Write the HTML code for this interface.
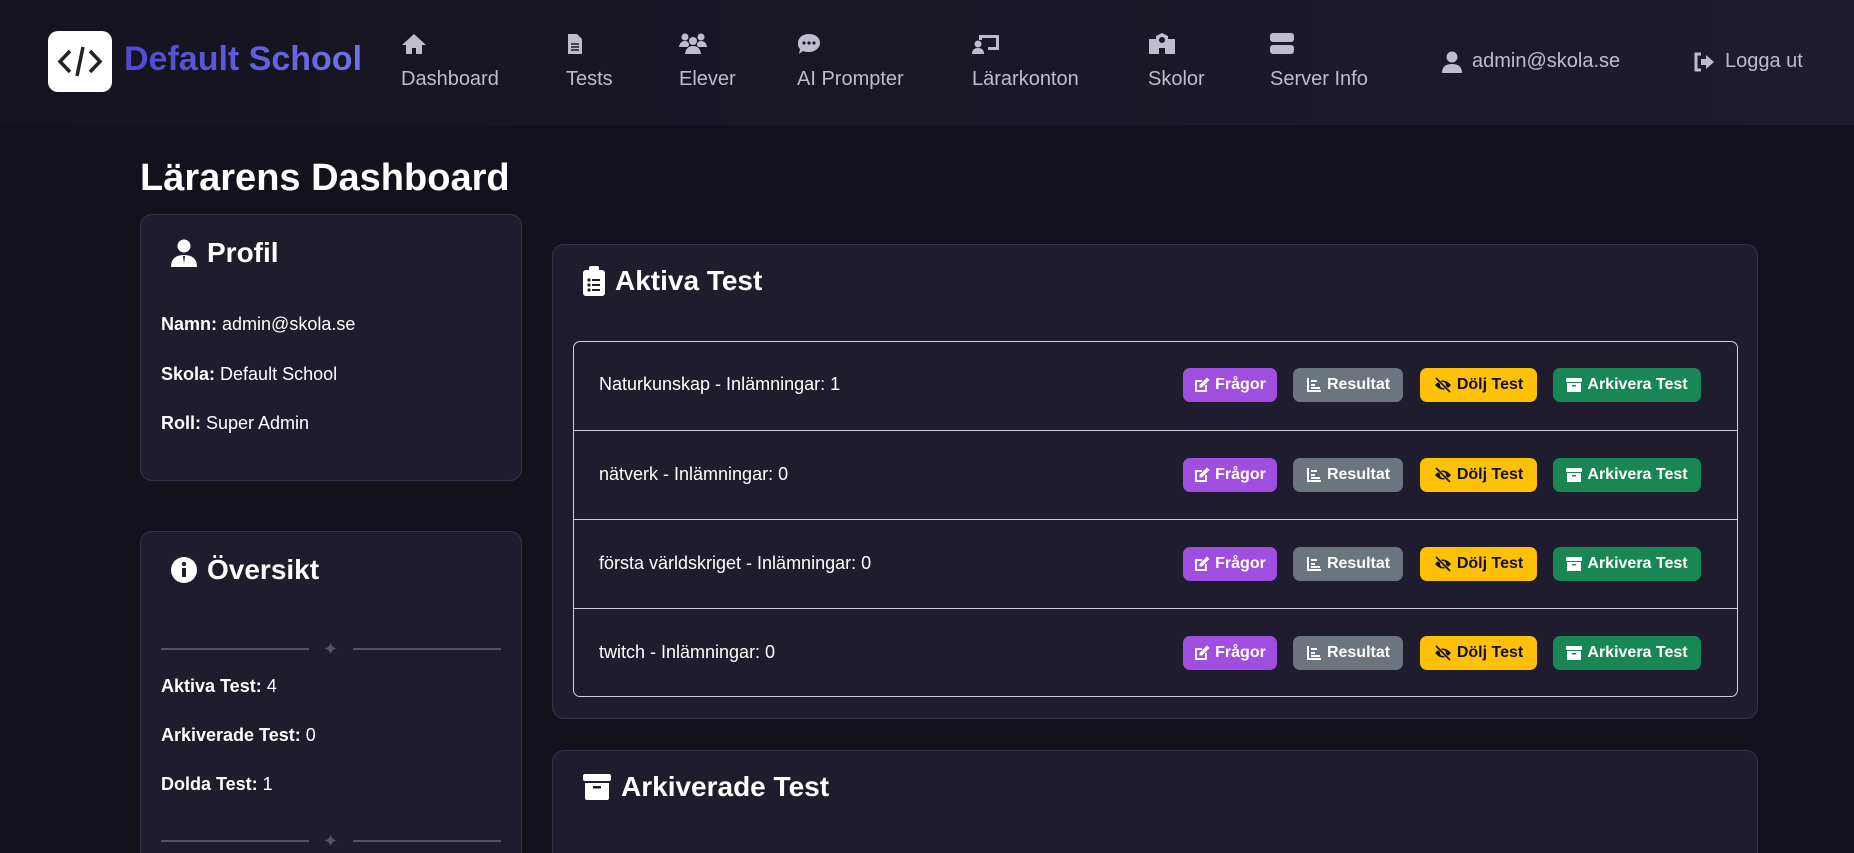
<!DOCTYPE html>
<html style="height:853px;overflow:hidden"><head><meta charset="utf-8"><style>
*{box-sizing:border-box;margin:0;padding:0}
body{width:1854px;height:853px;overflow:hidden;background:#13111c;font-family:"Liberation Sans",sans-serif;color:#fff;position:relative}
.abs{position:absolute}
.nav{position:absolute;left:0;top:0;width:1854px;height:125px;background:linear-gradient(90deg,#15131f,#1e1c2b)}
.ni{position:absolute;color:#bfbccb;font-size:20px;text-align:left}
.ni svg{display:block;margin-bottom:13px;fill:#bfbccb}
.card{position:absolute;background:#1e1c2d;border:1px solid #34324a;border-radius:12px}
.h{position:absolute;font-size:28px;font-weight:bold;display:flex;align-items:center;gap:10px}
.t{position:absolute;font-size:18px}
.row{position:absolute;left:0;width:100%;height:89px;border-top:1px solid #d0d0d8}
.row .lbl{position:absolute;left:25px;top:33px;font-size:18px}
.b{position:absolute;top:27px;height:34px;border-radius:7px;font-size:16px;font-weight:bold;display:flex;align-items:center;justify-content:center;gap:5px;color:#fff}
.b svg{width:16px;height:16px}
.div{position:absolute;left:20px;width:340px;height:2px}
.div:before,.div:after{content:"";position:absolute;top:0;width:148px;height:2px;background:#55536a}
.div:before{left:0}.div:after{right:0}
.div span{position:absolute;left:162px;top:-9px;color:#55536a;font-size:18px}
</style></head><body>
<div class="nav">
 <div class="abs" style="left:48px;top:31px;width:64px;height:61px;background:#fff;border-radius:10px"><svg width="64" height="61" viewBox="0 0 64 61"><path d="M22 20 L12 30.5 L22 41 M42 20 L52 30.5 L42 41 M35 16 L29 45" stroke="#222" stroke-width="3.5" fill="none"/></svg></div>
 <div class="abs" style="left:124px;top:40px;font-size:34px;font-weight:bold;color:#5d55d8;background:linear-gradient(90deg,#5048d4,#6f72e2);-webkit-background-clip:text;color:transparent">Default School</div>
 <div class="ni" style="left:401px;top:33px"><svg width="26" height="22" viewBox="0 0 26 22"><path d="M13 1 L25 12 H21 V21 H15 V15 H11 V21 H5 V12 H1Z"/></svg>Dashboard</div>
 <div class="ni" style="left:566px;top:33px"><svg width="18" height="22" viewBox="0 0 18 22"><path d="M2 1 H11 L16 6 V21 H2Z"/><path d="M5 11 H13 M5 14 H13 M5 17 H13" stroke="#1a1826" stroke-width="1.5"/></svg>Tests</div>
 <div class="ni" style="left:679px;top:33px"><svg width="28" height="22" viewBox="0 0 28 22"><circle cx="6" cy="4" r="3.5"/><circle cx="22" cy="4" r="3.5"/><circle cx="14" cy="8" r="4"/><path d="M0 14 Q1 8 6 8 Q10 8 10 12 L9 14Z M28 14 Q27 8 22 8 Q18 8 18 12 L19 14Z M6 21 Q7 13 14 13 Q21 13 22 21Z"/></svg>Elever</div>
 <div class="ni" style="left:797px;top:33px"><svg width="24" height="22" viewBox="0 0 24 22"><path d="M12 1 C19 1 23 5 23 10 C23 15 18 19 12 19 C10 19 8 19 6 18 L2 21 L3 16 C1 14 1 12 1 10 C1 5 5 1 12 1Z"/><circle cx="7" cy="10" r="1.6" fill="#1a1826"/><circle cx="12" cy="10" r="1.6" fill="#1a1826"/><circle cx="17" cy="10" r="1.6" fill="#1a1826"/></svg>AI Prompter</div>
 <div class="ni" style="left:972px;top:33px"><svg width="28" height="22" viewBox="0 0 28 22"><path d="M7 2 H27 V17 H16 V14 H24 V5 H10 V7 H7Z"/><circle cx="6" cy="11" r="3.5"/><path d="M0 21 Q0 15 6 15 Q12 15 12 21Z"/></svg>Lärarkonton</div>
 <div class="ni" style="left:1148px;top:33px"><svg width="28" height="22" viewBox="0 0 28 22"><path d="M1 6 H8 V3 L14 0 L20 3 V6 H27 V21 H17 V15 H11 V21 H1Z"/><circle cx="14" cy="7" r="3" fill="#1a1826"/></svg>Skolor</div>
 <div class="ni" style="left:1270px;top:33px"><svg width="24" height="22" viewBox="0 0 24 22"><rect x="0" y="0" width="24" height="9" rx="3"/><rect x="0" y="12" width="24" height="9" rx="3"/></svg>Server Info</div>
 <div class="ni" style="left:1442px;top:50px;display:flex;align-items:center;gap:10px"><svg width="20" height="22" viewBox="0 0 20 22" style="margin:0"><circle cx="10" cy="6" r="5.5"/><path d="M0 22 Q0 13 10 13 Q20 13 20 22Z"/></svg>admin@skola.se</div>
 <div class="ni" style="left:1693px;top:50px;display:flex;align-items:center;gap:10px"><svg width="22" height="20" viewBox="0 0 22 20" style="margin:0"><path d="M8 2 H3 V18 H8" stroke="#bfbccb" stroke-width="3" fill="none"/><path d="M8 7 H13 V3 L21 10 L13 17 V13 H8Z"/></svg>Logga ut</div>
</div>

<div class="abs" style="left:140px;top:157px;font-size:38px;font-weight:bold">Lärarens Dashboard</div>

<div class="card" style="left:140px;top:214px;width:382px;height:267px">
 <div class="h" style="left:30px;top:22px"><svg width="26" height="28" viewBox="0 0 26 28" fill="#fff"><circle cx="13" cy="7" r="6.5"/><path d="M0 28 Q0 16 13 16 Q26 16 26 28Z"/><path d="M12 17 L13 25 L14 17Z" fill="#1e1c2d"/></svg>Profil</div>
 <div class="t" style="left:20px;top:99px"><b>Namn:</b> admin@skola.se</div>
 <div class="t" style="left:20px;top:149px"><b>Skola:</b> Default School</div>
 <div class="t" style="left:20px;top:198px"><b>Roll:</b> Super Admin</div>
</div>

<div class="card" style="left:140px;top:531px;width:382px;height:340px;border-bottom:none">
 <div class="h" style="left:30px;top:22px"><svg width="26" height="26" viewBox="0 0 26 26"><circle cx="13" cy="13" r="13" fill="#fff"/><rect x="11" y="11" width="4" height="9" fill="#1e1c2d"/><circle cx="13" cy="7" r="2.2" fill="#1e1c2d"/></svg>Översikt</div>
 <div class="div" style="top:116px"><span>✦</span></div>
 <div class="t" style="left:20px;top:144px"><b>Aktiva Test:</b> 4</div>
 <div class="t" style="left:20px;top:193px"><b>Arkiverade Test:</b> 0</div>
 <div class="t" style="left:20px;top:242px"><b>Dolda Test:</b> 1</div>
 <div class="div" style="top:308px"><span>✦</span></div>
</div>

<div class="card" style="left:552px;top:244px;width:1206px;height:475px">
 <div class="h" style="left:30px;top:20px"><svg width="22" height="30" viewBox="0 0 22 30" fill="#fff"><rect x="0" y="4" width="22" height="26" rx="3"/><rect x="6" y="0" width="10" height="7" rx="2"/><g fill="#1e1c2d"><circle cx="6" cy="14" r="1.6"/><circle cx="6" cy="19" r="1.6"/><circle cx="6" cy="24" r="1.6"/><rect x="9" y="13" width="8" height="2"/><rect x="9" y="18" width="8" height="2"/><rect x="9" y="23" width="8" height="2"/></g></svg>Aktiva Test</div>
 <div class="abs" style="left:20px;top:96px;width:1165px;height:356px;border:1px solid #d0d0d8;border-radius:7px;overflow:hidden"></div>
</div>

<div class="card" style="left:552px;top:750px;width:1206px;height:120px;border-bottom:none">
 <div class="h" style="left:30px;top:20px"><svg width="28" height="26" viewBox="0 0 28 26" fill="#fff"><rect x="0" y="0" width="28" height="7" rx="2"/><path d="M2 9 H26 V24 Q26 26 24 26 H4 Q2 26 2 24Z"/><rect x="10" y="12" width="8" height="2.5" fill="#1e1c2d"/></svg>Arkiverade Test</div>
</div>

<script>
var box=document.querySelector('.card .abs');
var names=["Naturkunskap","nätverk","första världskriget","twitch"],counts=[1,0,0,0];
var pen='<svg viewBox="0 0 16 16" fill="#fff"><path d="M1 3 H8 V5 H3 V13 H11 V8 H13 V15 H1Z"/><path d="M13 0.5 L15.5 3 L8 10.5 L5.5 10.5 L5.5 8Z"/></svg>';
var chart='<svg viewBox="0 0 16 16" fill="#fff"><path d="M1 1 H3 V13 H15 V15 H1Z"/><rect x="5" y="3" width="6" height="2"/><rect x="5" y="7" width="4" height="2"/><rect x="5" y="10" width="9" height="2"/></svg>';
var eye='<svg viewBox="0 0 18 16" style="width:18px"><path d="M1 8 Q9 -1 17 8 Q9 17 1 8Z" fill="#111"/><circle cx="9" cy="8" r="3" fill="#ffc107"/><path d="M2 1 L16 15" stroke="#ffc107" stroke-width="3"/><path d="M2 1 L16 15" stroke="#111" stroke-width="1.6"/></svg>';
var arch='<svg viewBox="0 0 16 16" fill="#fff"><rect x="0" y="1" width="16" height="4" rx="1"/><path d="M1 6 H15 V15 H1Z"/><rect x="6" y="8" width="4" height="1.5" fill="#198754"/></svg>';
var h='';
for(var i=0;i<4;i++){
 h+='<div class="row" style="top:'+(i*89-1)+'px;'+(i==0?'border-top:none':'')+'"><div class="lbl">'+names[i]+' - Inlämningar: '+counts[i]+'</div>'+
 '<div class="b" style="left:609px;width:94px;background:#a04ee0">'+pen+'Frågor</div>'+
 '<div class="b" style="left:719px;width:110px;background:#6c757d">'+chart+'Resultat</div>'+
 '<div class="b" style="left:846px;width:117px;background:#ffc107;color:#111">'+eye+'Dölj Test</div>'+
 '<div class="b" style="left:979px;width:148px;background:#198754">'+arch+'Arkivera Test</div></div>';
}
box.innerHTML=h;
</script>
</body></html>
